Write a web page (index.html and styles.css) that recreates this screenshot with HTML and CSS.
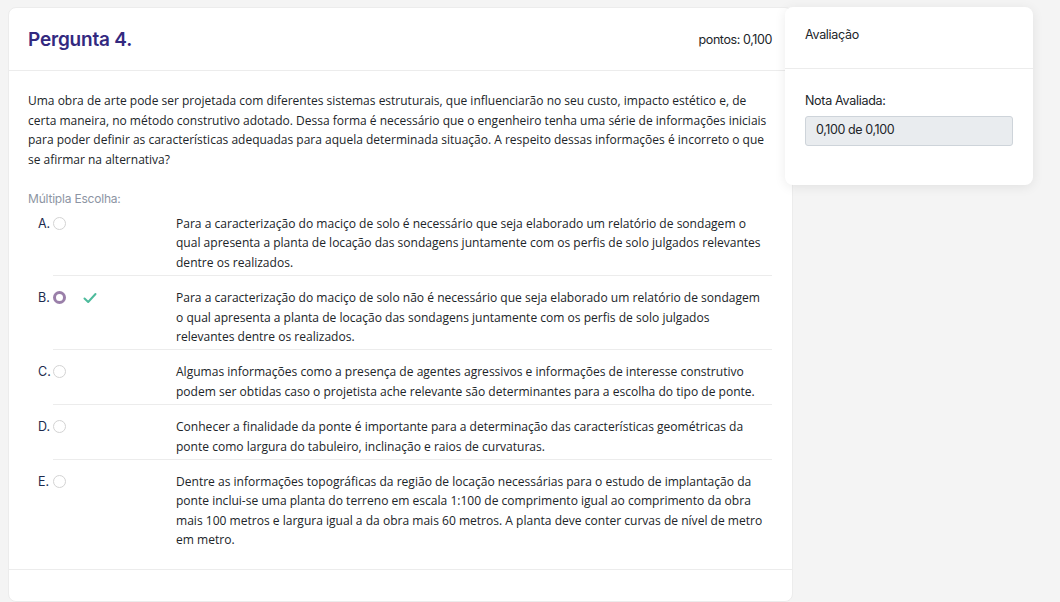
FILE: index.html
```html
<!DOCTYPE html>
<html lang="pt">
<head>
<meta charset="utf-8">
<link rel="stylesheet" href="styles.css">
</head>
<body>
<div class="page">
  <main class="card question">
    <header class="q-head">
      <h1 class="q-title">Pergunta 4.</h1>
      <span class="q-points">pontos: 0,100</span>
    </header>
    <section class="q-body">
      <p class="q-text">Uma obra de arte pode ser projetada com diferentes sistemas estruturais, que influenciarão no seu custo, impacto estético e, de certa maneira, no método construtivo adotado. Dessa forma é necessário que o engenheiro tenha uma série de informações iniciais para poder definir as características adequadas para aquela determinada situação. A respeito dessas informações é incorreto o que se afirmar na alternativa?</p>
      <div class="q-type">Múltipla Escolha:</div>
      <ul class="options">
        <li class="option">
          <div class="opt-mark"><span class="opt-letter">A.</span><span class="radio"></span></div>
          <div class="opt-text">Para a caracterização do maciço de solo é necessário que seja elaborado um relatório de sondagem o qual apresenta a planta de locação das sondagens juntamente com os perfis de solo julgados relevantes dentre os realizados.</div>
        </li>
        <li class="option">
          <div class="opt-mark"><span class="opt-letter">B.</span><span class="radio checked"></span>
            <svg class="check" viewBox="0 0 16 16" width="16" height="16"><path d="M2.5 8.5 L6.2 12 L13.5 4" fill="none" stroke="#4dbb9c" stroke-width="2" stroke-linecap="round" stroke-linejoin="round"/></svg>
          </div>
          <div class="opt-text">Para a caracterização do maciço de solo não é necessário que seja elaborado um relatório de sondagem o qual apresenta a planta de locação das sondagens juntamente com os perfis de solo julgados relevantes dentre os realizados.</div>
        </li>
        <li class="option">
          <div class="opt-mark"><span class="opt-letter">C.</span><span class="radio"></span></div>
          <div class="opt-text">Algumas informações como a presença de agentes agressivos e informações de interesse construtivo podem ser obtidas caso o projetista ache relevante são determinantes para a escolha do tipo de ponte.</div>
        </li>
        <li class="option">
          <div class="opt-mark"><span class="opt-letter">D.</span><span class="radio"></span></div>
          <div class="opt-text">Conhecer a finalidade da ponte é importante para a determinação das características geométricas da ponte como largura do tabuleiro, inclinação e raios de curvaturas.</div>
        </li>
        <li class="option last">
          <div class="opt-mark"><span class="opt-letter">E.</span><span class="radio"></span></div>
          <div class="opt-text">Dentre as informações topográficas da região de locação necessárias para o estudo de implantação da ponte inclui-se uma planta do terreno em escala 1:100 de comprimento igual ao comprimento da obra mais 100 metros e largura igual a da obra mais 60 metros. A planta deve conter curvas de nível de metro em metro.</div>
        </li>
      </ul>
    </section>
    <div class="q-foot"></div>
  </main>
  <aside class="card side">
    <div class="side-head">Avaliação</div>
    <div class="side-body">
      <div class="side-label">Nota Avaliada:</div>
      <div class="side-input">0,100 de 0,100</div>
    </div>
  </aside>
</div>
</body>
</html>
```

FILE: styles.css
```css
* { box-sizing: border-box; }
html, body { margin: 0; padding: 0; }
body {
  background: #f4f4f4;
  font-family: "Open Sans", "Noto Sans", sans-serif;
  color: #212529;
  width: 1060px;
  height: 602px;
  overflow: hidden;
}
.page {
  display: flex;
  align-items: flex-start;
  padding: 7px 0 0 8px;
}
.card {
  background: #fff;
  border-radius: 8px;
}
.question {
  width: 785px;
  height: 595px;
  border: 1px solid #ececec;
  display: flex;
  flex-direction: column;
}
.q-head {
  display: flex;
  align-items: center;
  justify-content: space-between;
  height: 63px;
  padding: 0 20px 0 19px;
  border-bottom: 1px solid #ececec;
}
.q-title {
  margin: 0;
  font-family: "Inter", sans-serif;
  font-weight: 600;
  font-size: 19px;
  color: #33297f;
  letter-spacing: -0.2px;
  padding-top: 1px;
}
.q-points {
  font-family: "Inter", sans-serif;
  font-size: 12.5px;
  color: #212529;
  letter-spacing: -0.4px;
  padding-top: 1px;
}
.q-body {
  padding: 20px 20px 0 19px;
  flex: 1;
  border-bottom: 1px solid #ececec;
}
.q-text {
  margin: 0;
  font-size: 12px;
  line-height: 19.5px;
}
.q-type {
  margin-top: 22px;
  font-family: "Inter", sans-serif;
  font-size: 12px;
  color: #8d95a3;
  letter-spacing: -0.2px;
}
.options {
  list-style: none;
  margin: 5px 0 0 25px;
  padding: 0;
}
.option {
  display: flex;
  padding: 12px 0 3px 0;
  border-bottom: 1px solid #ececec;
}
.option:first-child { padding-top: 3px; }
.option.last { border-bottom: none; }
.opt-mark {
  width: 143px;
  flex: none;
  display: flex;
  align-items: flex-start;
  height: 19px;
  margin-left: -20px;
  padding-left: 5px;
}
.opt-letter {
  font-family: "Inter", sans-serif;
  font-size: 12.5px;
  line-height: 19px;
  width: 15px;
  color: #1c2a4d;
}
.radio {
  width: 13px;
  height: 13px;
  border-radius: 50%;
  border: 1px solid #d3d3d3;
  margin-top: 3px;
  background: #fff;
}
.radio.checked {
  border: 3.5px solid #9a7fa9;
}
.check {
  margin-left: 16px;
  margin-top: 2px;
}
.opt-text {
  font-size: 12.05px;
  line-height: 19.4px;
  color: #212529;
  padding-right: 5px;
}
.q-foot { height: 31px; }
.side {
  width: 248px;
  height: 178px;
  margin-left: -8px;
  box-shadow: 0 2px 12px rgba(0,0,0,0.08);
}
.side-head {
  height: 62px;
  border-bottom: 1px solid #ececec;
  padding: 20px 20px 0 20px;
  font-family: "Inter", sans-serif;
  font-size: 12.5px;
  color: #212529;
  letter-spacing: -0.3px;
}
.side-body {
  padding: 24px 20px 0 20px;
}
.side-label {
  font-family: "Inter", sans-serif;
  font-size: 12.5px;
  letter-spacing: -0.3px;
  color: #212529;
  margin-bottom: 8px;
}
.side-input {
  width: 208px;
  height: 30px;
  background: #e9ecef;
  border: 1px solid #ced4da;
  border-radius: 3px;
  padding: 5px 10px;
  font-family: "Inter", sans-serif;
  font-size: 12.5px;
  letter-spacing: -0.4px;
  color: #212529;
}
```
